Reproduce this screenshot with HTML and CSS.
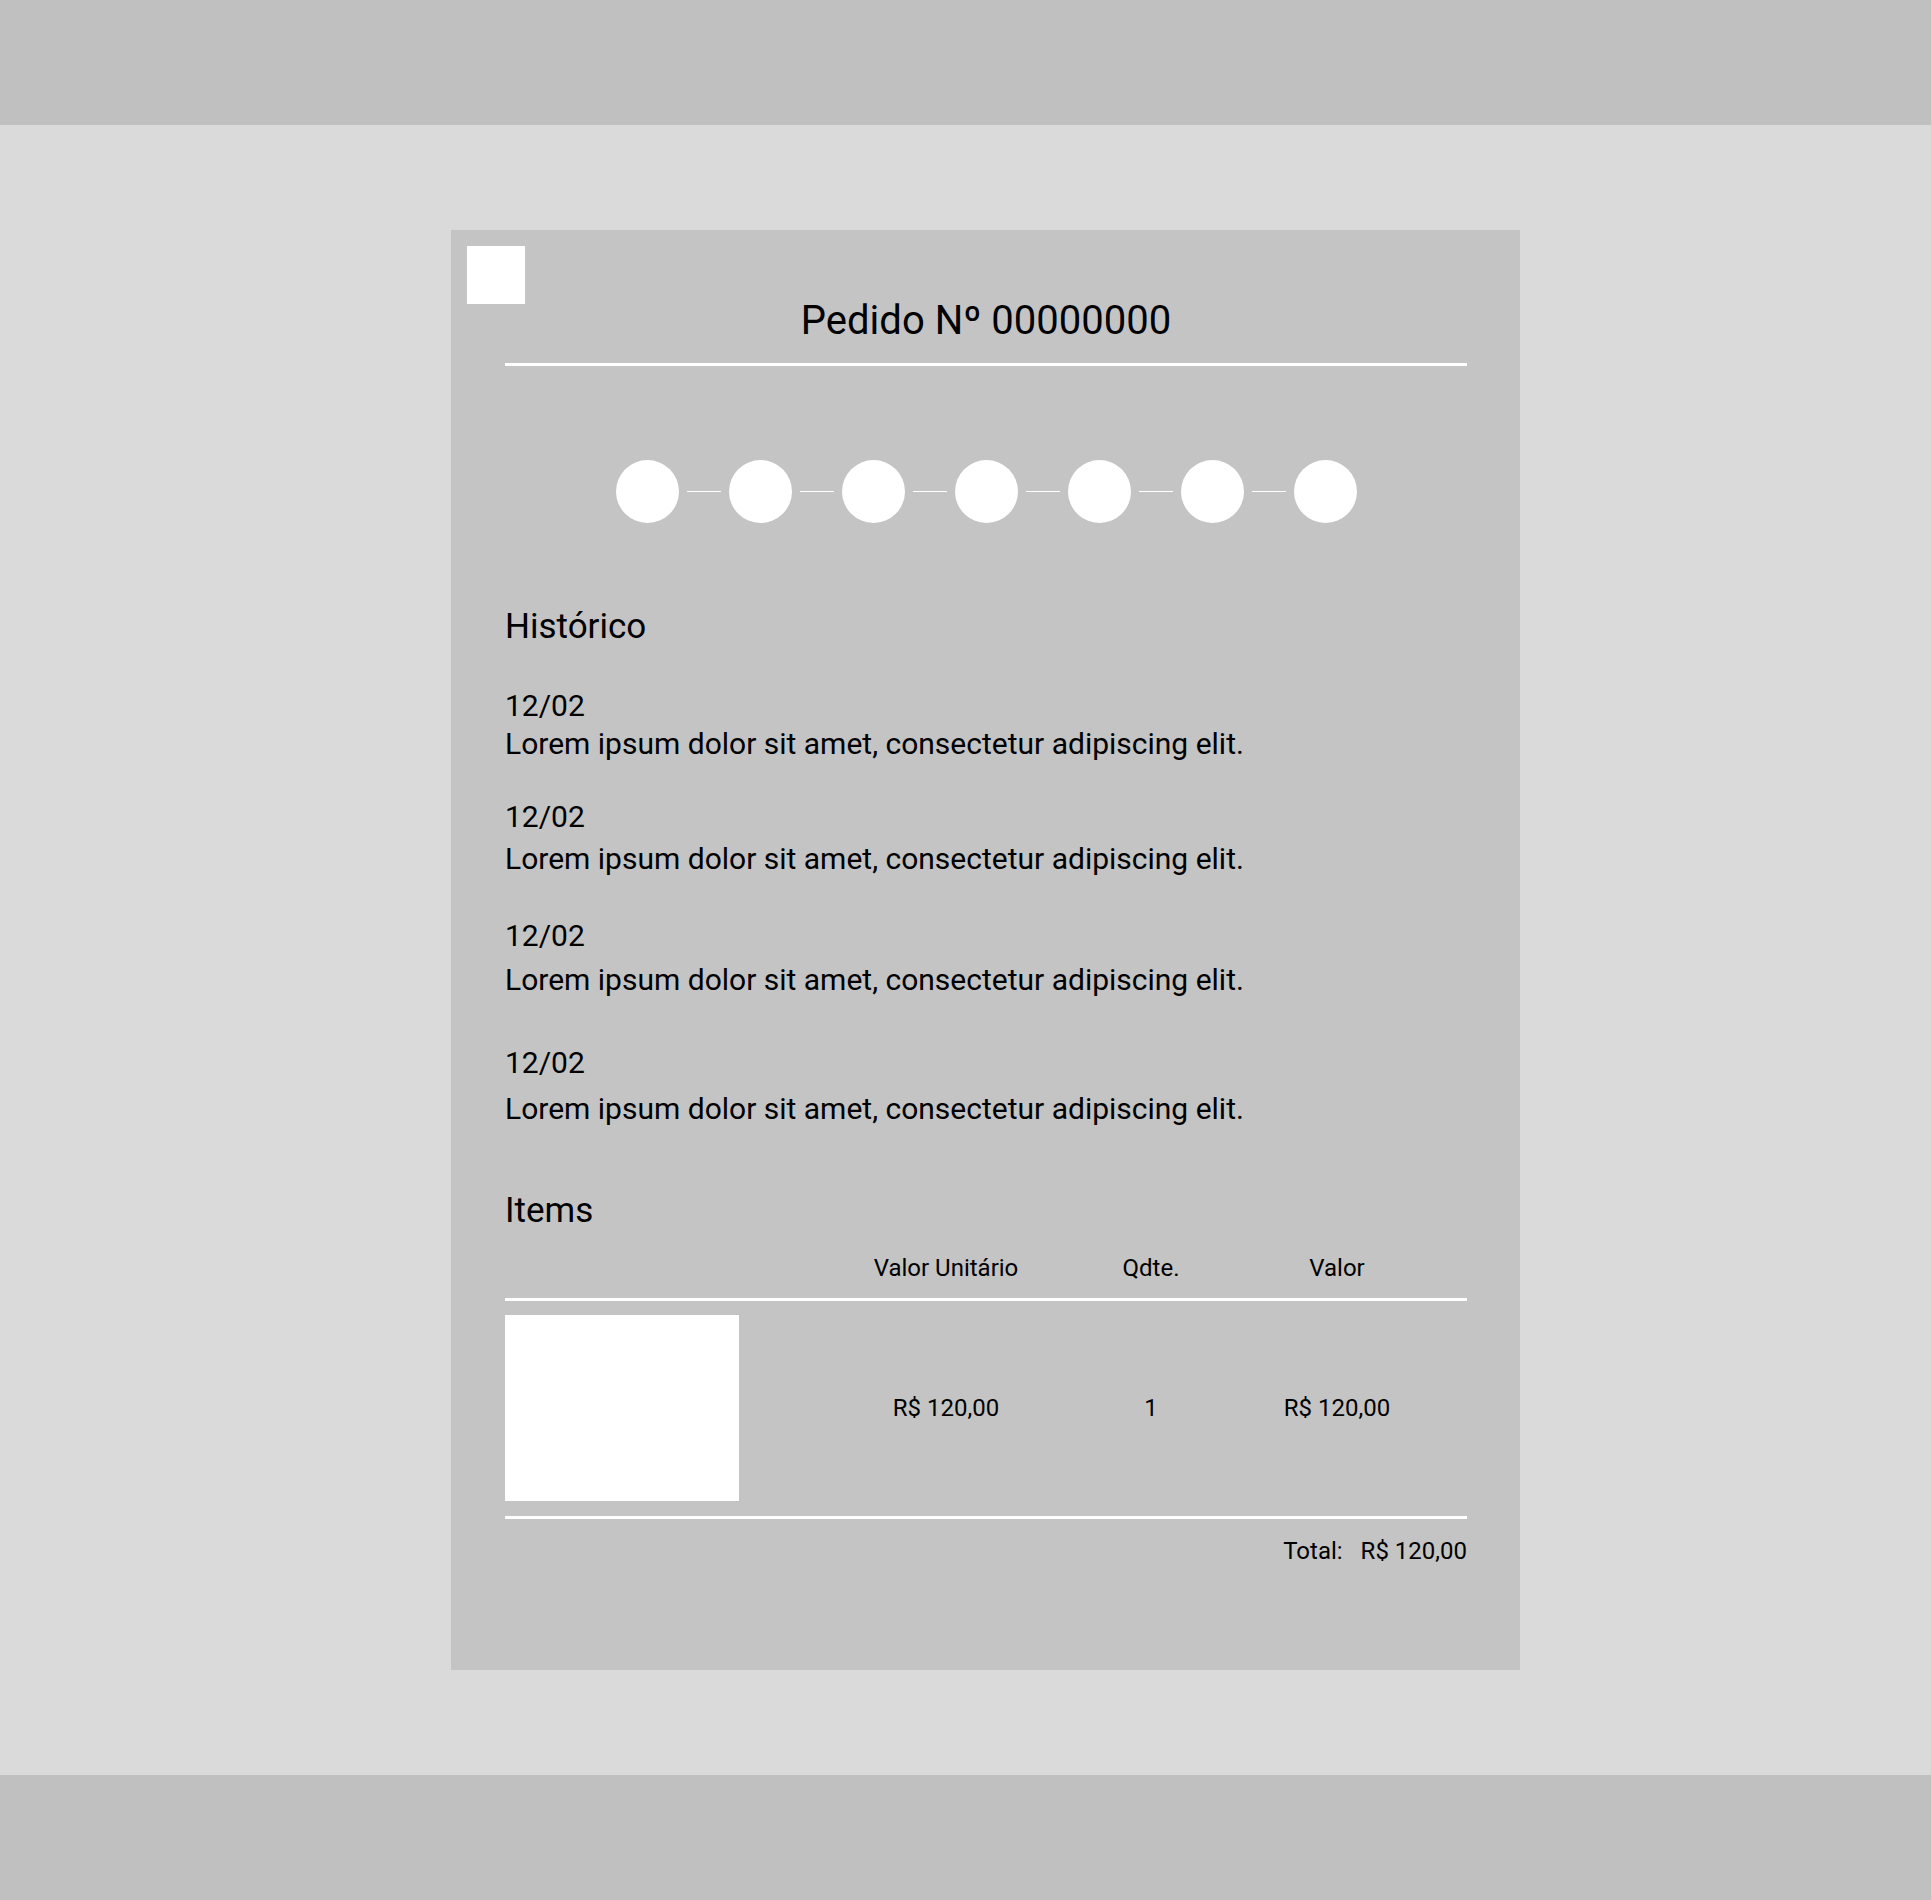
FILE: index.html
```html
<!DOCTYPE html>
<html lang="pt-BR">
<head>
  <meta charset="UTF-8">
  <meta name="viewport" content="width=device-width, initial-scale=1.0">
  <title>Pedido Nº 00000000</title>
  <link rel="stylesheet" href="styles.css">
</head>
<body>
  <header class="topbar"></header>

  <main class="page">
    <section class="order-card">
      <button class="corner-button" aria-label="Voltar"></button>

      <h1 class="order-title">Pedido Nº 00000000</h1>

      <div class="steps">
        <span class="step"></span>
        <span class="step-link"></span>
        <span class="step"></span>
        <span class="step-link"></span>
        <span class="step"></span>
        <span class="step-link"></span>
        <span class="step"></span>
        <span class="step-link"></span>
        <span class="step"></span>
        <span class="step-link"></span>
        <span class="step"></span>
        <span class="step-link"></span>
        <span class="step"></span>
      </div>

      <h2 class="section-title history-title">Histórico</h2>
      <div class="history">
        <div class="history-entry">
          <div class="history-date">12/02</div>
          <div class="history-text">Lorem ipsum dolor sit amet, consectetur adipiscing elit.</div>
        </div>
        <div class="history-entry">
          <div class="history-date">12/02</div>
          <div class="history-text">Lorem ipsum dolor sit amet, consectetur adipiscing elit.</div>
        </div>
        <div class="history-entry">
          <div class="history-date">12/02</div>
          <div class="history-text">Lorem ipsum dolor sit amet, consectetur adipiscing elit.</div>
        </div>
        <div class="history-entry">
          <div class="history-date">12/02</div>
          <div class="history-text">Lorem ipsum dolor sit amet, consectetur adipiscing elit.</div>
        </div>
      </div>

      <h2 class="section-title items-title">Items</h2>
      <div class="items-table">
        <div class="items-row items-head">
          <span></span>
          <span>Valor Unitário</span>
          <span>Qdte.</span>
          <span>Valor</span>
        </div>
        <div class="items-row items-body">
          <div class="item-thumb"></div>
          <span>R$ 120,00</span>
          <span>1</span>
          <span>R$ 120,00</span>
        </div>
      </div>
      <div class="items-total">
        <span>Total:</span>
        <span>R$ 120,00</span>
      </div>
    </section>
  </main>

  <footer class="bottombar"></footer>
</body>
</html>
```

FILE: styles.css
```css
:root {
  --bar-bg: #c0c0c0;
  --page-bg: #dadada;
  --card-bg: #c4c4c4;
  --white: #ffffff;
  --text: #000000;
}

body {
  margin: 0;
  padding: 0;
  font-family: Roboto, 'Liberation Sans', sans-serif;
  color: var(--text);
  background-color: var(--page-bg);
}

.topbar,
.bottombar {
  height: 125px;
  background-color: var(--bar-bg);
}

.page {
  padding: 105px 0;
  background-color: var(--page-bg);
}

.order-card {
  position: relative;
  width: 962px;
  margin-left: 451px;
  padding: 67px 53px 104px 54px;
  background-color: var(--card-bg);
}

.corner-button {
  position: absolute;
  top: 16px;
  left: 16px;
  width: 58px;
  height: 58px;
  padding: 0;
  border: none;
  background-color: var(--white);
  cursor: pointer;
}

.order-title {
  margin: 0;
  padding-bottom: 18px;
  border-bottom: 3px solid var(--white);
  font-size: 40px;
  line-height: 48px;
  font-weight: 400;
  text-align: center;
}

.steps {
  display: flex;
  justify-content: center;
  align-items: center;
  gap: 8px;
  margin-top: 94px;
}

.step {
  width: 63px;
  height: 63px;
  border-radius: 50%;
  background-color: var(--white);
}

.step-link {
  width: 34px;
  height: 1px;
  background-color: var(--white);
}

.section-title {
  margin: 0;
  font-size: 35px;
  line-height: 42px;
  font-weight: 400;
}

.history-title {
  margin-top: 83px;
}

.history {
  margin-top: 39px;
}

.history-date,
.history-text {
  font-size: 30px;
  line-height: 38px;
}

.history-entry:nth-child(2) .history-text { margin-top: 4px; }
.history-entry:nth-child(3) .history-text { margin-top: 6px; }
.history-entry:nth-child(4) .history-text { margin-top: 8px; }

.history-entry:nth-child(2) { margin-top: 35px; }
.history-entry:nth-child(3) { margin-top: 39px; }
.history-entry:nth-child(4) { margin-top: 45px; }

.items-title {
  margin-top: 62px;
}

.items-table {
  margin-top: 21px;
}

.items-row {
  display: grid;
  grid-template-columns: 341px 200px 210px 162px;
  align-items: center;
  text-align: center;
  font-size: 24px;
  line-height: 30px;
  border-bottom: 3px solid var(--white);
}

.items-head {
  padding-bottom: 15px;
}

.items-body {
  padding: 14px 0 15px;
}

.item-thumb {
  width: 234px;
  height: 186px;
  background-color: var(--white);
}

.items-total {
  display: flex;
  justify-content: flex-end;
  gap: 18px;
  margin-top: 17px;
  font-size: 24px;
  line-height: 30px;
}
```
